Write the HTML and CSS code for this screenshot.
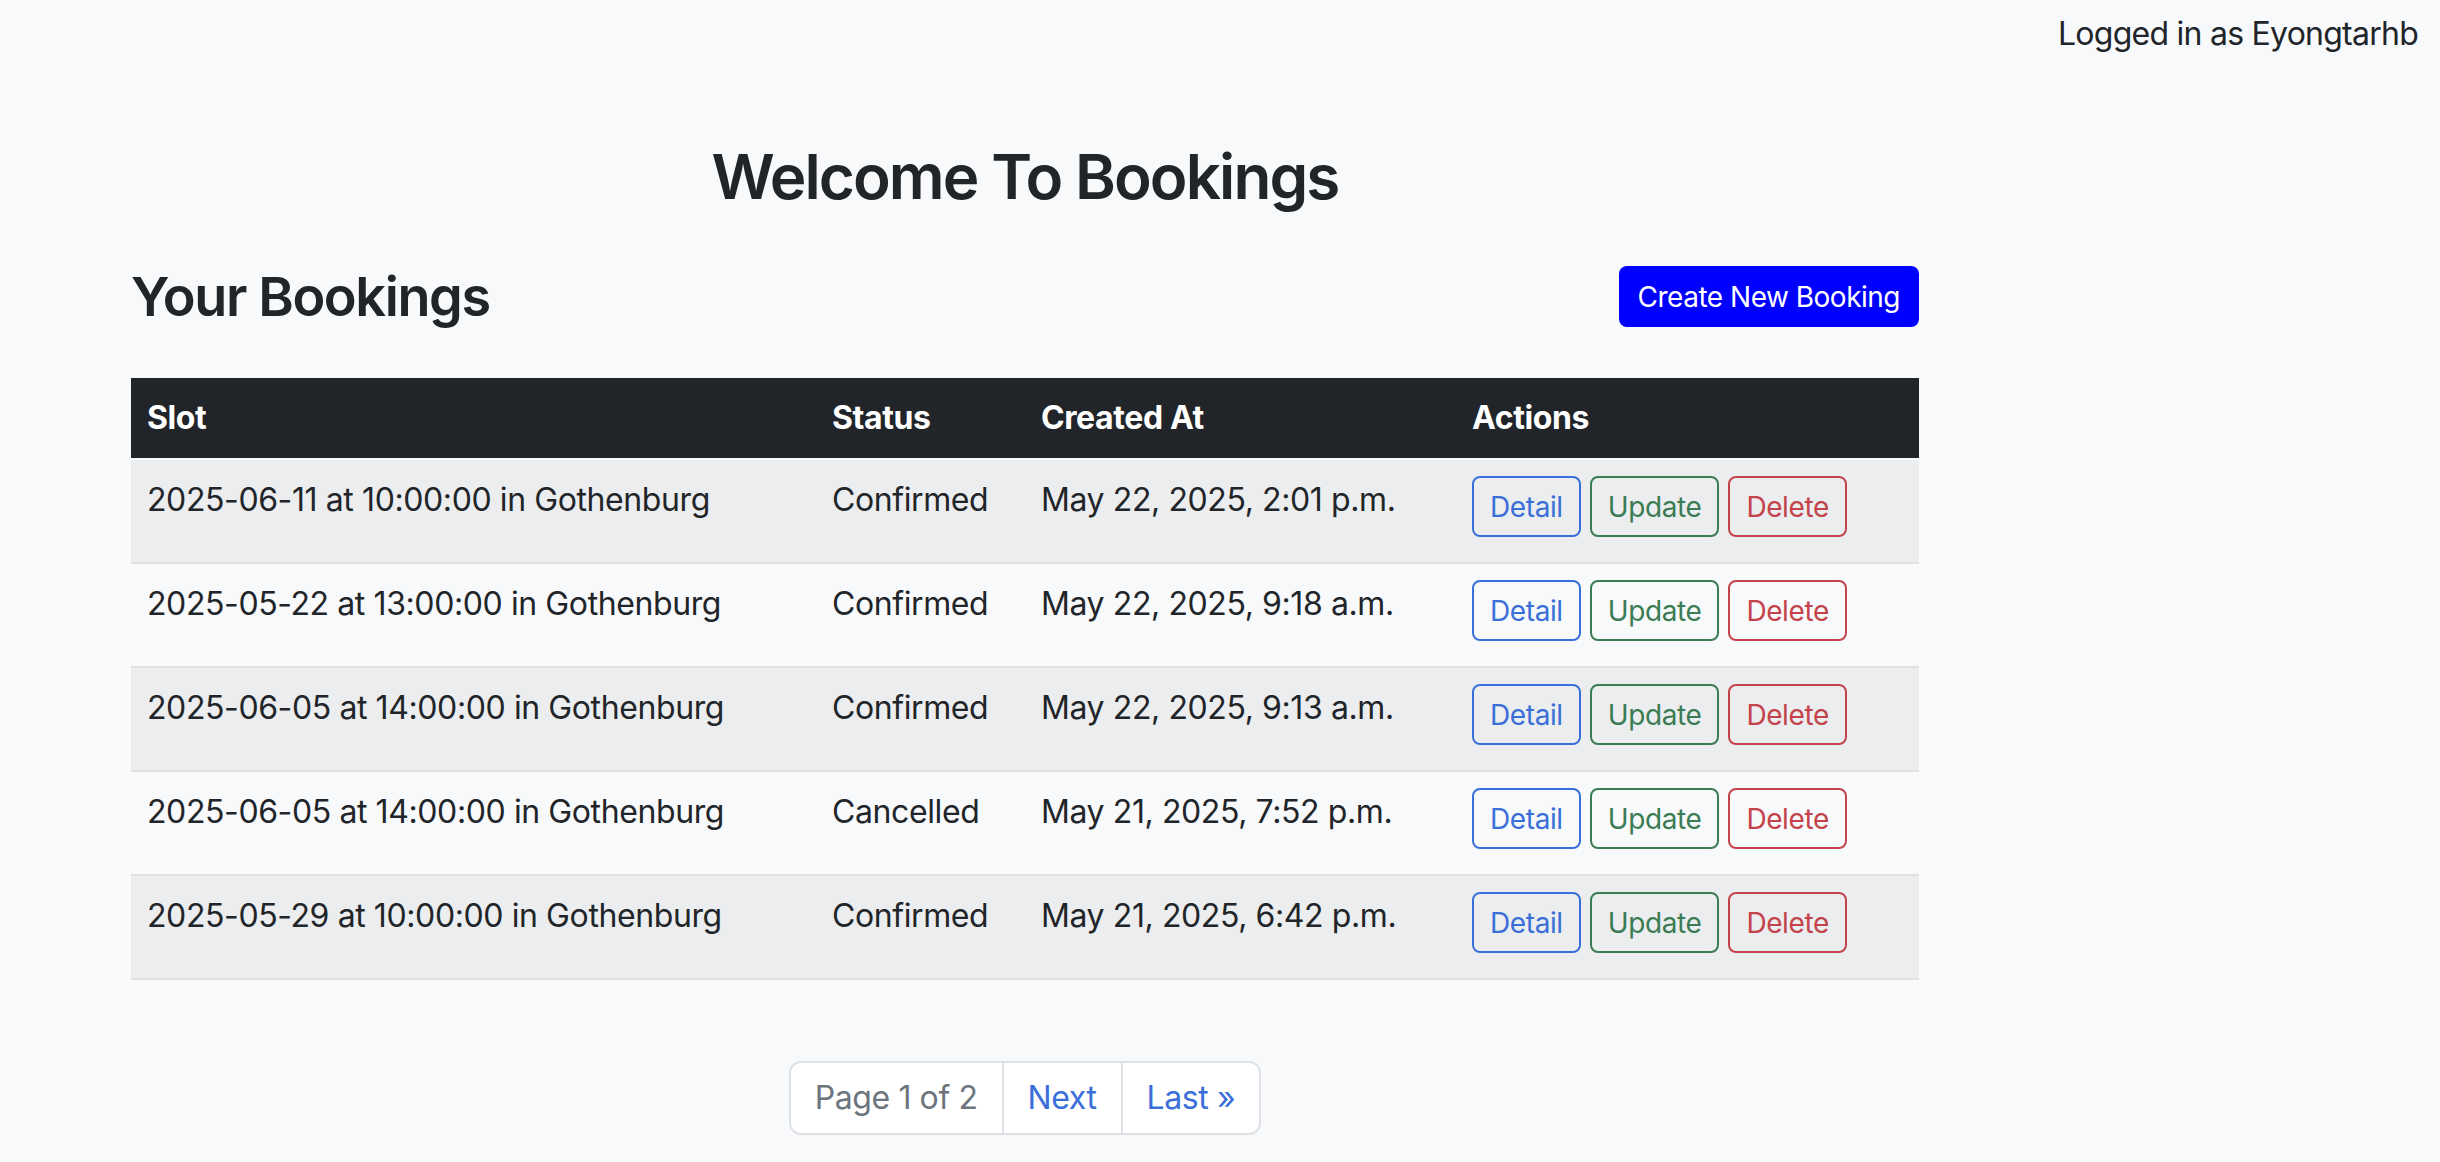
FILE: index.html
```html
<!DOCTYPE html>
<html lang="en">
<head>
<meta charset="utf-8">
<title>Bookings</title>
<link rel="stylesheet" href="styles.css">
</head>
<body>
<div class="topbar">
  <span class="user">Logged in as Eyongtarhb</span>
</div>
<main class="content">
  <h2 class="welcome">Welcome To Bookings</h2>
  <div class="section-head">
    <h3 class="section-title">Your Bookings</h3>
    <a class="btn-create" href="#">Create New Booking</a>
  </div>
  <table class="bookings">
    <colgroup>
      <col class="c-slot"><col class="c-status"><col class="c-created"><col class="c-actions">
    </colgroup>
    <thead>
      <tr><th>Slot</th><th>Status</th><th>Created At</th><th>Actions</th></tr>
    </thead>
    <tbody>
      <tr class="odd">
        <td>2025-06-11 at 10:00:00 in Gothenburg</td><td>Confirmed</td><td>May 22, 2025, 2:01 p.m.</td>
        <td><div class="actions"><a class="btn btn-detail" href="#">Detail</a><a class="btn btn-update" href="#">Update</a><a class="btn btn-delete" href="#">Delete</a></div></td>
      </tr>
      <tr>
        <td>2025-05-22 at 13:00:00 in Gothenburg</td><td>Confirmed</td><td>May 22, 2025, 9:18 a.m.</td>
        <td><div class="actions"><a class="btn btn-detail" href="#">Detail</a><a class="btn btn-update" href="#">Update</a><a class="btn btn-delete" href="#">Delete</a></div></td>
      </tr>
      <tr class="odd">
        <td>2025-06-05 at 14:00:00 in Gothenburg</td><td>Confirmed</td><td>May 22, 2025, 9:13 a.m.</td>
        <td><div class="actions"><a class="btn btn-detail" href="#">Detail</a><a class="btn btn-update" href="#">Update</a><a class="btn btn-delete" href="#">Delete</a></div></td>
      </tr>
      <tr>
        <td>2025-06-05 at 14:00:00 in Gothenburg</td><td>Cancelled</td><td>May 21, 2025, 7:52 p.m.</td>
        <td><div class="actions"><a class="btn btn-detail" href="#">Detail</a><a class="btn btn-update" href="#">Update</a><a class="btn btn-delete" href="#">Delete</a></div></td>
      </tr>
      <tr class="odd">
        <td>2025-05-29 at 10:00:00 in Gothenburg</td><td>Confirmed</td><td>May 21, 2025, 6:42 p.m.</td>
        <td><div class="actions"><a class="btn btn-detail" href="#">Detail</a><a class="btn btn-update" href="#">Update</a><a class="btn btn-delete" href="#">Delete</a></div></td>
      </tr>
    </tbody>
  </table>
  <nav class="pager">
    <span class="page-item page-current">Page 1 of 2</span>
    <a class="page-item page-link" href="#">Next</a>
    <a class="page-item page-link" href="#">Last &raquo;</a>
  </nav>
</main>
</body>
</html>
```

FILE: styles.css
```css
* { box-sizing: border-box; }

html, body {
  margin: 0;
  padding: 0;
}

body {
  background: #f8f9fa;
  color: #212529;
  font-family: Inter, "Noto Sans", "Liberation Sans", sans-serif;
  font-size: 32px;
  line-height: 48px;
  letter-spacing: -0.4px;
}

.topbar {
  display: flex;
  justify-content: flex-end;
  padding: 10px 22px 0 0;
  height: 58px;
}

.user {
  letter-spacing: -0.75px;
}

.content {
  width: 1788px;
  margin: 0 0 0 131px;
  padding-top: 80px;
}

.welcome {
  margin: 0;
  text-align: center;
  font-size: 62px;
  line-height: 77px;
  font-weight: 560;
  letter-spacing: -1.9px;
}

.section-head {
  display: flex;
  justify-content: space-between;
  align-items: center;
  margin-top: 48px;
  margin-bottom: 48px;
}

.section-title {
  margin: 0;
  font-size: 54px;
  line-height: 67px;
  font-weight: 560;
  letter-spacing: -1.4px;
}

.btn-create {
  display: inline-flex;
  align-items: center;
  height: 61px;
  padding: 0 19px;
  background: #0000ff;
  color: #ffffff;
  border-radius: 8px;
  font-size: 28px;
  letter-spacing: -0.5px;
  text-decoration: none;
}

.bookings {
  width: 1788px;
  border-collapse: collapse;
  table-layout: fixed;
}

.c-slot { width: 685px; }
.c-status { width: 209px; }
.c-created { width: 431px; }
.c-actions { width: 463px; }

.bookings th {
  background: #212529;
  color: #ffffff;
  font-weight: 700;
  text-align: left;
  padding: 16px;
  border-bottom: 2px solid #f8f9fa;
}

.bookings td {
  vertical-align: top;
  text-align: left;
  padding: 16px 16px 25px;
  border-bottom: 2px solid #dfe1e3;
}

.bookings tr.odd td {
  background: #ecedee;
}

.actions {
  display: flex;
  gap: 9px;
}

.btn {
  display: inline-flex;
  align-items: center;
  height: 61px;
  padding: 0 16px;
  border: 2px solid;
  border-radius: 8px;
  font-size: 28px;
  letter-spacing: -0.4px;
  text-decoration: none;
}

.btn-detail { color: #3a6fd9; border-color: #3a6fd9; }
.btn-update { color: #3a7c53; border-color: #3a7c53; }
.btn-delete { color: #c4434b; border-color: #c4434b; }

.pager {
  display: flex;
  justify-content: center;
  margin-top: 81px;
}

.page-item {
  display: block;
  padding: 11px 24px;
  background: #ffffff;
  border: 2px solid #dee2e6;
  margin-left: -2px;
  text-decoration: none;
}

.page-item:first-child {
  margin-left: 0;
  border-radius: 12px 0 0 12px;
}

.page-item:last-child {
  border-radius: 0 12px 12px 0;
}

.page-current { color: #6c757d; }
.page-link { color: #3a6fd9; }
```
